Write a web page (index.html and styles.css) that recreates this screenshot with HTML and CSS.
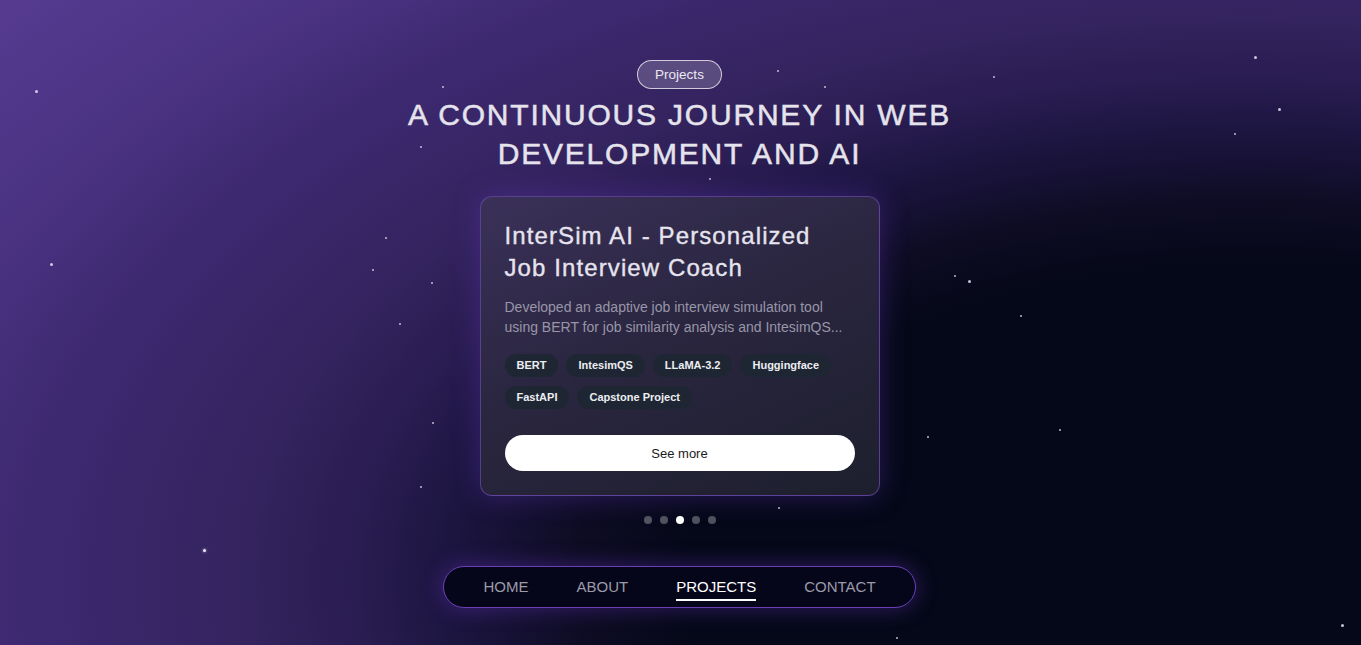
FILE: index.html
```html
<!DOCTYPE html>
<html lang="en">
<head>
<meta charset="utf-8">
<title>Projects</title>
<link rel="stylesheet" href="styles.css">
</head>
<body>
<div class="sky">
  <div class="stars" aria-hidden="true">
    <span class="star s2" style="left:35px;top:90px"></span>
    <span class="star s2" style="left:50px;top:263px"></span>
    <span class="star s3" style="left:203px;top:549px"></span>
    <span class="star s1" style="left:385px;top:237px"></span>
    <span class="star s1" style="left:372px;top:269px"></span>
    <span class="star s1" style="left:399px;top:323px"></span>
    <span class="star s1" style="left:431px;top:282px"></span>
    <span class="star s1" style="left:442px;top:86px"></span>
    <span class="star s1" style="left:420px;top:146px"></span>
    <span class="star s1" style="left:432px;top:422px"></span>
    <span class="star s1" style="left:420px;top:486px"></span>
    <span class="star s1" style="left:709px;top:178px"></span>
    <span class="star s1" style="left:777px;top:70px"></span>
    <span class="star s1" style="left:824px;top:86px"></span>
    <span class="star s1" style="left:993px;top:76px"></span>
    <span class="star s2" style="left:1254px;top:56px"></span>
    <span class="star s2" style="left:1278px;top:108px"></span>
    <span class="star s1" style="left:1234px;top:133px"></span>
    <span class="star s1" style="left:954px;top:275px"></span>
    <span class="star s2" style="left:968px;top:280px"></span>
    <span class="star s1" style="left:1020px;top:315px"></span>
    <span class="star s1" style="left:1059px;top:429px"></span>
    <span class="star s1" style="left:927px;top:436px"></span>
    <span class="star s2" style="left:1341px;top:624px"></span>
    <span class="star s1" style="left:896px;top:637px"></span>
    <span class="star s1" style="left:778px;top:507px"></span>
  </div>

  <main class="section">
    <span class="badge">Projects</span>
    <h1 class="heading">A CONTINUOUS JOURNEY IN WEB<br>DEVELOPMENT AND AI</h1>

    <article class="card">
      <h2 class="card-title">InterSim AI - Personalized Job Interview Coach</h2>
      <p class="card-desc">Developed an adaptive job interview simulation tool using BERT for job similarity analysis and IntesimQS...</p>
      <ul class="tags">
        <li class="tag">BERT</li>
        <li class="tag">IntesimQS</li>
        <li class="tag">LLaMA-3.2</li>
        <li class="tag">Huggingface</li>
        <li class="tag">FastAPI</li>
        <li class="tag">Capstone Project</li>
      </ul>
      <button class="see-more" type="button">See more</button>
    </article>

    <div class="dots">
      <span class="dot"></span>
      <span class="dot"></span>
      <span class="dot active"></span>
      <span class="dot"></span>
      <span class="dot"></span>
    </div>

    <nav class="nav">
      <a class="nav-link" href="#">HOME</a>
      <a class="nav-link" href="#">ABOUT</a>
      <a class="nav-link active" href="#">PROJECTS</a>
      <a class="nav-link" href="#">CONTACT</a>
    </nav>
  </main>
</div>
</body>
</html>
```

FILE: styles.css
```css
* { box-sizing: border-box; }

html, body {
  margin: 0;
  padding: 0;
  height: 645px;
  overflow: hidden;
  background: #050818;
}

body {
  font-family: "Liberation Sans", Arial, sans-serif;
  color: #e6e4ee;
}

.sky {
  position: relative;
  width: 100%;
  height: 645px;
  overflow: hidden;
  background:
    radial-gradient(ellipse 1250px 700px at 1250px 580px,
      #050818 0%, #050818 45%, #0e0c24 54%, #1c1540 64%, #2a1d52 72%, #33235e 80%,
      #3f2a73 100%, #4a3281 110%, #563b90 130%);
}

.stars {
  position: absolute;
  inset: 0;
  pointer-events: none;
}

.star {
  position: absolute;
  border-radius: 50%;
  background: #e8e6f4;
}
.s1 { width: 2px; height: 2px; opacity: 0.8; }
.s2 { width: 3px; height: 3px; opacity: 0.85; }
.s3 { width: 3px; height: 3px; box-shadow: 0 0 3px rgba(255,255,255,0.7); }

.section {
  position: relative;
  display: flex;
  flex-direction: column;
  align-items: center;
  padding: 60px 2px 0 0;
}

.badge {
  display: inline-block;
  height: 29px;
  padding: 0 17px;
  border: 1px solid rgba(255, 255, 255, 0.72);
  border-radius: 15px;
  background: rgba(255, 255, 255, 0.18);
  color: #ece9f4;
  font-size: 13.5px;
  line-height: 27px;
}

.heading {
  margin: 6px 0 0;
  font-size: 30px;
  line-height: 39px;
  font-weight: 400;
  -webkit-text-stroke: 0.5px #e5e3ec;
  letter-spacing: 1.8px;
  text-align: center;
  color: #e5e3ec;
}

.card {
  margin-top: 23px;
  width: 400px;
  padding: 23px 24px 24px;
  border: 1px solid rgba(122, 84, 200, 0.6);
  border-radius: 12px;
  background: linear-gradient(155deg, #3b3159 0%, #2a2640 45%, #1d1f2d 100%);
  box-shadow: 0 0 28px rgba(110, 60, 210, 0.35);
}

.card-title {
  margin: 0;
  font-size: 24px;
  line-height: 32px;
  font-weight: 400;
  -webkit-text-stroke: 0.35px #e6e4ee;
  letter-spacing: 1.1px;
  color: #e6e4ee;
}

.card-desc {
  margin: 13px 0 0;
  font-size: 14px;
  line-height: 20px;
  color: #9896a8;
}

.tags {
  list-style: none;
  margin: 17px 0 0;
  padding: 0;
  display: flex;
  flex-wrap: wrap;
  gap: 9px 8px;
}

.tag {
  height: 23px;
  padding: 0 12px;
  border-radius: 12px;
  background: #1f2633;
  color: #eceef2;
  font-size: 11px;
  line-height: 23px;
  font-weight: 700;
}

.see-more {
  display: block;
  width: 100%;
  height: 36px;
  margin-top: 26px;
  border: 0;
  border-radius: 18px;
  background: #ffffff;
  color: #1a1a22;
  font-family: "Liberation Sans", Arial, sans-serif;
  font-size: 13px;
}

.dots {
  display: flex;
  gap: 8px;
  margin-top: 20px;
}

.dot {
  width: 8px;
  height: 8px;
  border-radius: 50%;
  background: rgba(255, 255, 255, 0.3);
}
.dot.active { background: #ffffff; }

.nav {
  margin-top: 42px;
  display: flex;
  align-items: center;
  gap: 48px;
  height: 42px;
  padding: 0 39px;
  border: 1.5px solid #6a3fb6;
  border-radius: 21px;
  background: #05061a;
  box-shadow: 0 0 22px rgba(120, 60, 220, 0.4);
}

.nav-link {
  position: relative;
  font-size: 15px;
  line-height: 20px;
  color: #9c9ba8;
  text-decoration: none;
}

.nav-link.active { color: #ffffff; }
.nav-link.active::after {
  content: "";
  position: absolute;
  left: 0;
  right: 0;
  top: 22px;
  height: 2px;
  background: #ffffff;
}
```
